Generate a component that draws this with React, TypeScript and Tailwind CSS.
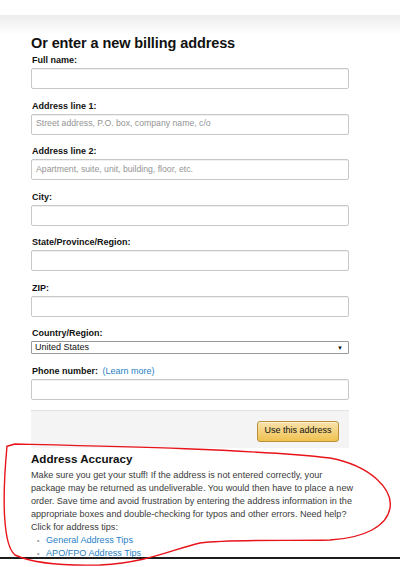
import type { ReactNode } from "react";

const font = { fontFamily: '"Liberation Sans", Arial, sans-serif' };

type FieldProps = {
  label: ReactNode;
  placeholder?: string;
};

function Field({ label, placeholder }: FieldProps) {
  return (
    <div className="flex flex-col">
      <div className="h-[12px] pl-[1px] text-[9px] font-bold leading-[12px] text-[#111]">{label}</div>
      <div className="mt-[2px] flex h-[21px] items-center rounded-[2px] border border-[#c8c8c8] bg-white pl-[4px] shadow-[inset_0_1px_0_rgba(0,0,0,0.06)]">
        {placeholder && <span className="text-[8.7px] text-[#949494]">{placeholder}</span>}
      </div>
    </div>
  );
}

function CountrySelect() {
  return (
    <div className="flex flex-col">
      <div className="h-[12px] pl-[1px] text-[9px] font-bold leading-[12px] text-[#111]">Country/Region:</div>
      <div className="mt-[2px] flex h-[13px] items-center justify-between rounded-[1px] border border-[#9a9a9a] bg-white pl-[3px] pr-[5px]">
        <span className="text-[9px] leading-none text-[#111]">United States</span>
        <span className="text-[6px] leading-none text-[#111]">▼</span>
      </div>
    </div>
  );
}

export default function App() {
  return (
    <div className="relative h-[567px] w-[400px] overflow-hidden bg-white" style={font}>
      <div className="h-[15px]" />
      <div className="h-[20px] bg-gradient-to-b from-[#ececec] to-white" />

      <div className="ml-[31px] w-[318px]">
        <h1 className="-mt-[0.5px] text-[14.5px] font-bold leading-[17px] tracking-[-0.1px] text-[#111]">
          Or enter a new billing address
        </h1>

        <div className="mt-[2.5px] flex flex-col gap-[10.5px]">
          <Field label="Full name:" />
          <Field label="Address line 1:" placeholder="Street address, P.O. box, company name, c/o" />
          <Field label="Address line 2:" placeholder="Apartment, suite, unit, building, floor, etc." />
          <Field label="City:" />
          <Field label="State/Province/Region:" />
          <Field label="ZIP:" />
          <CountrySelect />
          <Field
            label={
              <>
                Phone number:{" "}
                <span className="ml-[2px] font-normal text-[#2a7fc4]">(Learn more)</span>
              </>
            }
          />
        </div>

        <div className="mt-[10px] flex h-[38px] justify-end border-t border-[#e3e3e3] bg-[#f4f4f4] pr-[10px] pt-[10px]">
          <button className="h-[21px] w-[82px] rounded-[3px] border border-[#b8913a] bg-gradient-to-b from-[#f8e2a9] to-[#efc14c] text-[9px] text-[#111] shadow-[inset_0_1px_0_rgba(255,255,255,0.5)]">
            Use this address
          </button>
        </div>

        <h2 className="mt-[4px] text-[11.6px] font-bold leading-[14px] text-[#111]">Address Accuracy</h2>
        <p className="mt-[3px] whitespace-nowrap text-[9.1px] leading-[13px] text-[#3a3a3a]">
          Make sure you get your stuff! If the address is not entered correctly, your
          <br />
          package may be returned as undeliverable. You would then have to place a new
          <br />
          order. Save time and avoid frustration by entering the address information in the
          <br />
          appropriate boxes and double-checking for typos and other errors. Need help?
          <br />
          Click for address tips:
        </p>
        <ul className="whitespace-nowrap text-[9.1px] leading-[13px]">
          <li className="flex items-center">
            <span className="w-[15px] pl-[6px] text-[7px] text-[#999]">•</span>
            <span className="text-[#2a7fc4]">General Address Tips</span>
          </li>
          <li className="flex items-center">
            <span className="w-[15px] pl-[6px] text-[7px] text-[#999]">•</span>
            <span className="text-[#2a7fc4]">APO/FPO Address Tips</span>
          </li>
        </ul>
      </div>

      {/* page rule crossing the bottom */}
      <div className="absolute left-0 top-[557px] h-[1.5px] w-full bg-[#1c1c1c]" />

      {/* hand-drawn marker loop */}
      <svg className="pointer-events-none absolute inset-0" width="400" height="567" viewBox="0 0 400 567">
        <path
          d="M8 446 L15 444 C100 446 250 449 330 458 C372 466 393 490 390 508 C387 526 365 538 330 540 C290 541 230 539 200 543 C170 550 150 562 100 565 C60 566 30 562 15 555 C3 545 2 500 7 446"
          fill="none"
          stroke="#e8141b"
          strokeWidth="1.4"
          strokeLinecap="round"
          strokeLinejoin="round"
        />
      </svg>
    </div>
  );
}
